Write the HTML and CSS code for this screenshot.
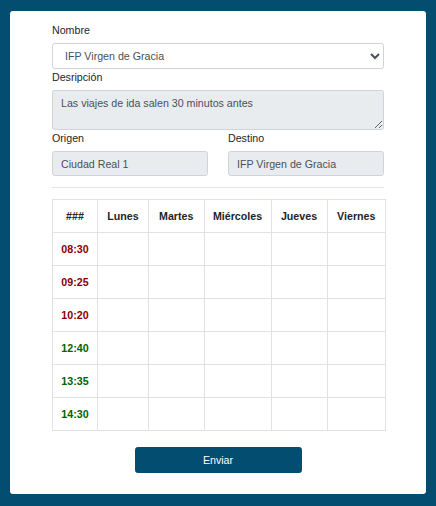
FILE: index.html
```html
<!DOCTYPE html>
<html lang="es">
<head>
<meta charset="utf-8">
<title>Horario</title>
<link rel="stylesheet" href="styles.css">
</head>
<body>
<div class="card">
  <form class="form">
    <label class="label" for="nombre">Nombre</label>
    <select id="nombre" class="control select">
      <option>IFP Virgen de Gracia</option>
    </select>
    <label class="label" for="desc">Desripción</label>
    <textarea id="desc" class="control textarea" readonly>Las viajes de ida salen 30 minutos antes</textarea>
    <div class="row">
      <div class="col">
        <label class="label" for="origen">Origen</label>
        <input id="origen" class="control input" type="text" value="Ciudad Real 1" readonly>
      </div>
      <div class="col">
        <label class="label" for="destino">Destino</label>
        <input id="destino" class="control input" type="text" value="IFP Virgen de Gracia" readonly>
      </div>
    </div>
    <hr class="sep">
    <table class="table">
      <colgroup>
        <col class="c1"><col class="c2"><col class="c3"><col class="c4"><col class="c5"><col class="c6">
      </colgroup>
      <thead>
        <tr><th>###</th><th>Lunes</th><th>Martes</th><th>Miércoles</th><th>Jueves</th><th>Viernes</th></tr>
      </thead>
      <tbody>
        <tr><th class="ida">08:30</th><td></td><td></td><td></td><td></td><td></td></tr>
        <tr><th class="ida">09:25</th><td></td><td></td><td></td><td></td><td></td></tr>
        <tr><th class="ida">10:20</th><td></td><td></td><td></td><td></td><td></td></tr>
        <tr><th class="vuelta">12:40</th><td></td><td></td><td></td><td></td><td></td></tr>
        <tr><th class="vuelta">13:35</th><td></td><td></td><td></td><td></td><td></td></tr>
        <tr><th class="vuelta">14:30</th><td></td><td></td><td></td><td></td><td></td></tr>
      </tbody>
    </table>
    <div class="actions">
      <button type="button" class="btn">Enviar</button>
    </div>
  </form>
</div>
</body>
</html>
```
FILE: styles.css
```css
html, body {
  margin: 0;
  padding: 0;
}
body {
  background: #024d70;
  font-family: "Liberation Sans", Arial, sans-serif;
  font-size: 10.667px;
  line-height: 16px;
  color: #212529;
  padding: 11px 10px 11px 10px;
  height: 506px;
  box-sizing: border-box;
}
.card {
  background: #fff;
  border-radius: 3px;
  padding: 11px 42px 21px 42px;
  width: 416px;
  box-sizing: border-box;
}
.form {
  display: flex;
  flex-direction: column;
}
.label {
  display: block;
  font-size: 10.667px;
  line-height: 16px;
  margin-bottom: 5.333px;
  color: #212529;
}
.control {
  display: block;
  width: 100%;
  box-sizing: border-box;
  font-family: "Liberation Sans", Arial, sans-serif;
  font-size: 10.667px;
  line-height: 16px;
  color: #495057;
  border: 1px solid #ced4da;
  border-radius: 2.667px;
  padding: 4px 8px;
  margin: 0;
  outline: none;
}
.select {
  height: 25.333px;
  background: #fff;
  padding: 0 4px 0 8px;
}
.textarea {
  height: 39.667px;
  background: #e9ecef;
  resize: vertical;
}
.input {
  height: 25.333px;
  background: #e9ecef;
}
.row {
  display: grid;
  grid-template-columns: 1fr 1fr;
  column-gap: 20px;
}
.sep {
  border: 0;
  border-top: 1px solid rgba(0, 0, 0, 0.1);
  margin: 10.667px 0 10.667px 0;
  height: 0;
}
.table {
  width: 100%;
  border-collapse: collapse;
  table-layout: fixed;
  margin-bottom: 16px;
}
.c1 { width: 45px; }
.c2 { width: 51px; }
.c3 { width: 55.5px; }
.c4 { width: 67px; }
.c5 { width: 56px; }
.c6 { width: 58.5px; }
.table th,
.table td {
  border: 1px solid #dee2e6;
  padding: 8px 0;
  height: 16px;
  line-height: 16px;
  font-size: 10.667px;
  text-align: center;
  vertical-align: middle;
}
.table th {
  font-weight: bold;
  color: #212529;
}
.table th.ida { color: #8b0000; }
.table th.vuelta { color: #006400; }
.actions {
  display: flex;
  justify-content: center;
}
.btn {
  width: 167px;
  height: 26px;
  background: #024d70;
  color: #fff;
  border: 1px solid #024d70;
  border-radius: 2.667px;
  font-family: "Liberation Sans", Arial, sans-serif;
  font-size: 10.667px;
  line-height: 16px;
  padding: 0;
  cursor: pointer;
}
```
